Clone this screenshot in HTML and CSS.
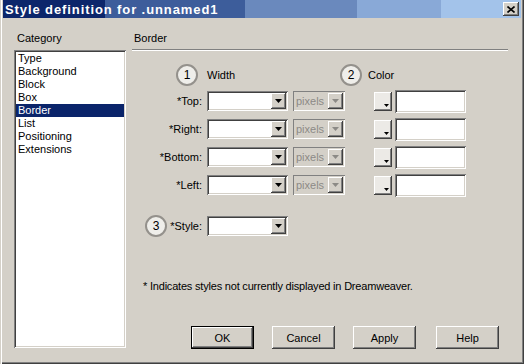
FILE: index.html
```html
<!DOCTYPE html>
<html lang="en">
<head>
  <meta charset="UTF-8" />
  <title>Style definition for .unnamed1</title>
  <link rel="stylesheet" href="styles.css">
</head>
<body>
  <div class="window">
    <!-- Title bar -->
    <div class="titlebar">
      <span class="title">Style definition for .unnamed1</span>
      <span class="close">
        <svg width="8" height="7" viewBox="0 0 8 7"><path d="M0.5 0.5L7.5 6.5M7.5 0.5L0.5 6.5" stroke="#000" stroke-width="1.6"/></svg>
      </span>
    </div>

    <div class="content">
      <!-- Category list -->
      <div class="category">
        <div class="cat-label">Category</div>
        <ul class="list sunken">
          <li>Type</li>
          <li>Background</li>
          <li>Block</li>
          <li>Box</li>
          <li class="selected">Border</li>
          <li>List</li>
          <li>Positioning</li>
          <li>Extensions</li>
        </ul>
      </div>

      <!-- Border panel -->
      <div class="panel">
        <div class="panel-title">Border</div>
        <div class="rule"></div>

        <div class="head-row">
          <div class="head-group first">
            <span class="step">1</span><span>Width</span>
          </div>
          <div class="head-group">
            <span class="step">2</span><span>Color</span>
          </div>
        </div>

        <div class="row">
          <span class="row-label">*Top:</span>
          <div class="select sunken"><span class="value"></span><span class="arrow"><svg width="7" height="4" viewBox="0 0 7 4"><path d="M0 0h7L3.5 4z"/></svg></span></div>
          <div class="select small disabled"><span class="value">pixels</span><span class="arrow"><svg width="7" height="4" viewBox="0 0 7 4"><path d="M0 0h7L3.5 4z"/></svg></span></div>
          <span class="swatch"><svg width="5" height="3" viewBox="0 0 5 3"><path d="M0 0h5L2.5 3z"/></svg></span>
          <span class="color-input sunken"></span>
        </div>
        <div class="row">
          <span class="row-label">*Right:</span>
          <div class="select sunken"><span class="value"></span><span class="arrow"><svg width="7" height="4" viewBox="0 0 7 4"><path d="M0 0h7L3.5 4z"/></svg></span></div>
          <div class="select small disabled"><span class="value">pixels</span><span class="arrow"><svg width="7" height="4" viewBox="0 0 7 4"><path d="M0 0h7L3.5 4z"/></svg></span></div>
          <span class="swatch"><svg width="5" height="3" viewBox="0 0 5 3"><path d="M0 0h5L2.5 3z"/></svg></span>
          <span class="color-input sunken"></span>
        </div>
        <div class="row">
          <span class="row-label">*Bottom:</span>
          <div class="select sunken"><span class="value"></span><span class="arrow"><svg width="7" height="4" viewBox="0 0 7 4"><path d="M0 0h7L3.5 4z"/></svg></span></div>
          <div class="select small disabled"><span class="value">pixels</span><span class="arrow"><svg width="7" height="4" viewBox="0 0 7 4"><path d="M0 0h7L3.5 4z"/></svg></span></div>
          <span class="swatch"><svg width="5" height="3" viewBox="0 0 5 3"><path d="M0 0h5L2.5 3z"/></svg></span>
          <span class="color-input sunken"></span>
        </div>
        <div class="row">
          <span class="row-label">*Left:</span>
          <div class="select sunken"><span class="value"></span><span class="arrow"><svg width="7" height="4" viewBox="0 0 7 4"><path d="M0 0h7L3.5 4z"/></svg></span></div>
          <div class="select small disabled"><span class="value">pixels</span><span class="arrow"><svg width="7" height="4" viewBox="0 0 7 4"><path d="M0 0h7L3.5 4z"/></svg></span></div>
          <span class="swatch"><svg width="5" height="3" viewBox="0 0 5 3"><path d="M0 0h5L2.5 3z"/></svg></span>
          <span class="color-input sunken"></span>
        </div>

        <div class="row style-row">
          <span class="row-label"><span class="step">3</span>*Style:</span>
          <div class="select sunken"><span class="value"></span><span class="arrow"><svg width="7" height="4" viewBox="0 0 7 4"><path d="M0 0h7L3.5 4z"/></svg></span></div>
        </div>

        <p class="note">* Indicates styles not currently displayed in Dreamweaver.</p>

        <div class="buttons">
          <button class="btn default">OK</button>
          <button class="btn">Cancel</button>
          <button class="btn">Apply</button>
          <button class="btn help">Help</button>
        </div>
      </div>
    </div>
  </div>
</body>
</html>
```

FILE: styles.css
```css
/* Classic dialog look */
* {
  box-sizing: border-box;
}

body {
  margin: 0;
  font-family: 'Liberation Sans', Arial, sans-serif;
  font-size: 11px;
  color: #000;
  background: #d4d0c8;
}

.window {
  width: 524px;
  height: 364px;
  background: #d4d0c8;
  padding: 0 3px 0 3px;
  box-shadow: inset 1px 0 #d4d0c8, inset 2px 0 #fff, inset -1px -1px #404040, inset -2px -2px #808080;
}

/* Title bar with banded gradient */
.titlebar {
  height: 18px;
  display: flex;
  align-items: center;
  justify-content: space-between;
  padding: 0 2px 0 2px;
  background: linear-gradient(90deg, #0c266b 0 102px, #3d5d9b 102px 242px, #6a89bd 242px 354px, #89a9d7 354px 438px, #a3c3ea 438px);
}

.title {
  color: #fff;
  font-weight: 700;
  font-size: 13px;
  letter-spacing: 0.9px;
}

.close {
  width: 16px;
  height: 14px;
  display: flex;
  align-items: center;
  justify-content: center;
  background: #d4d0c8;
  box-shadow: inset -1px -1px #404040, inset 1px 1px #fff, inset -2px -2px #808080;
}

.content {
  display: flex;
  padding-top: 14px;
}

/* Category list */
.category {
  margin-left: 11px;
  width: 112px;
}

.cat-label {
  height: 18px;
  line-height: 13px;
  padding-left: 3px;
}

.list {
  list-style: none;
  margin: 0;
  padding: 2px;
  height: 298px;
  background: #fff;
}

.list li {
  height: 13px;
  line-height: 13px;
  padding-left: 2px;
}

.list li.selected {
  background: #0a246a;
  color: #fff;
}

/* Bevels */
.sunken {
  box-shadow: inset 1px 1px #808080, inset -1px -1px #fff, inset 2px 2px #404040, inset -2px -2px #d4d0c8;
}

/* Right panel */
.panel {
  margin-left: 6px;
  width: 376px;
  display: flex;
  flex-direction: column;
}

.panel-title {
  line-height: 13px;
  padding-left: 2px;
}

.rule {
  margin-top: 4px;
  height: 2px;
  border-top: 1px solid #808080;
  border-bottom: 1px solid #fff;
}

.head-row {
  display: flex;
  align-items: center;
  margin-top: 13px;
  height: 22px;
}

.head-group {
  display: flex;
  align-items: center;
  gap: 6px;
}

.head-group.first {
  width: 208px;
  padding-left: 44px;
  gap: 9px;
}

.step {
  width: 22px;
  height: 22px;
  border-radius: 50%;
  border: 2px solid #94918c;
  background: #efeeea;
  display: inline-flex;
  align-items: center;
  justify-content: center;
  font-size: 12px;
  flex-shrink: 0;
}

/* Width / colour rows */
.row {
  display: flex;
  align-items: center;
  height: 28px;
}

.head-row + .row {
  margin-top: 1px;
}

.row-label {
  width: 70px;
  margin-right: 5px;
  text-align: right;
  display: flex;
  justify-content: flex-end;
  align-items: center;
  gap: 3px;
}

.select {
  width: 81px;
  height: 20px;
  padding: 2px;
  display: flex;
  background: #fff;
}

.select .value {
  flex: 1;
  line-height: 16px;
  padding-left: 2px;
}

.select .arrow {
  width: 15px;
  height: 16px;
  background: #d4d0c8;
  display: flex;
  align-items: center;
  justify-content: center;
  box-shadow: inset -1px -1px #404040, inset 1px 1px #fff, inset -2px -2px #808080;
}

.select.small {
  width: 52px;
  margin-left: 5px;
}

.select.disabled {
  background: #d4d0c8;
  box-shadow: inset 1px 1px #808080, inset -1px -1px #fff;
}

.select.disabled .value {
  color: #8c8a86;
  padding-left: 1px;
}

.select.disabled .arrow path {
  fill: #8c8a86;
}

.swatch {
  margin-left: 29px;
  width: 18px;
  height: 19px;
  background: #eceae6;
  display: flex;
  align-items: flex-end;
  justify-content: flex-end;
  padding: 0 3px 4px 0;
  box-shadow: inset -1px -1px #404040, inset 1px 1px #fff, inset -2px -2px #808080;
}

.color-input {
  margin-left: 3px;
  width: 71px;
  height: 23px;
  background: #fff;
}

.style-row {
  margin-top: 13px;
}

.note {
  margin: 40px 0 0 11px;
  line-height: 13px;
  letter-spacing: -0.2px;
}

/* Dialog buttons */
.buttons {
  display: flex;
  gap: 18px;
  margin-top: 33px;
  padding-left: 59px;
}

.btn {
  width: 63px;
  height: 23px;
  font-family: inherit;
  font-size: 11px;
  color: #000;
  background: #d4d0c8;
  border: none;
  padding: 0;
  box-shadow: inset -1px -1px #404040, inset 1px 1px #fff, inset -2px -2px #808080;
}

.btn.default {
  border: 1px solid #000;
}

.btn.help {
  margin-left: 2px;
}
```
